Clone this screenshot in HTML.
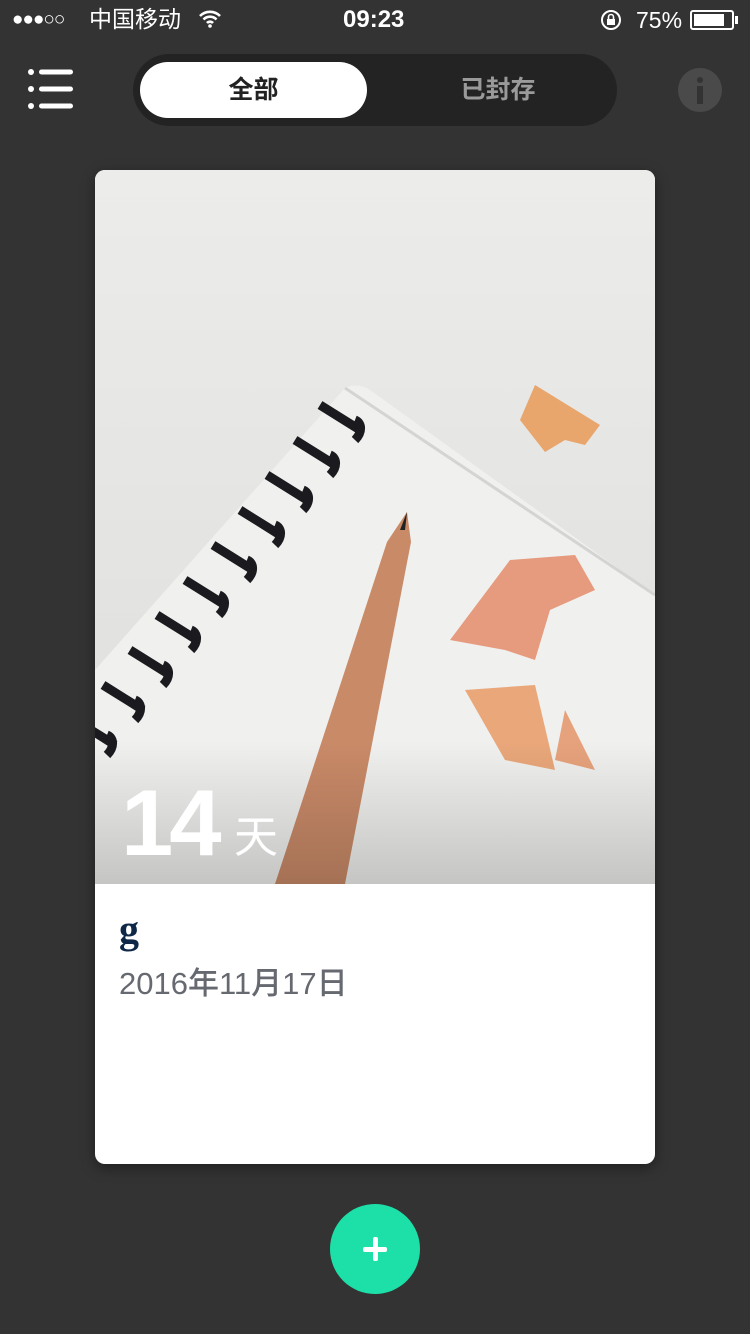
<!DOCTYPE html>
<html><head><meta charset="utf-8">
<style>
*{margin:0;padding:0;box-sizing:border-box}
body{width:750px;height:1334px;background:#333333;position:relative;overflow:hidden;font-family:"Liberation Sans","Noto Sans CJK SC",sans-serif;color:#fff}
.sb{position:absolute;top:0;left:0;width:750px;height:40px;font-size:23px;line-height:40px}
.seg{position:absolute;left:133px;top:54px;width:484px;height:72px;border-radius:36px;background:#232323}
.seg .on{position:absolute;left:7px;top:8px;width:227px;height:56px;border-radius:28px;background:#fff;color:#222;font-size:25px;font-weight:bold;text-align:center;line-height:56px}
.seg .off{position:absolute;left:250px;top:8px;width:230px;height:56px;color:#9a9a9a;font-size:25px;font-weight:bold;text-align:center;line-height:56px}
.card{position:absolute;left:95px;top:170px;width:560px;height:994px;background:#fff;border-radius:10px;overflow:hidden;box-shadow:0 4px 14px rgba(0,0,0,.4)}
.img{position:absolute;left:0;top:0;width:560px;height:714px;background:#e9e9e7}
.fab{position:absolute;left:330px;top:1204px;width:90px;height:90px;border-radius:45px;background:#1de0a8}
</style></head><body>
<div class="sb">
 <div style="position:absolute;left:12px;top:0;font-size:19px;letter-spacing:-1px">●●●○○</div>
 <div style="position:absolute;left:89px;top:-1px">中国移动</div>
 <svg style="position:absolute;left:198px;top:10px" width="24" height="18" viewBox="0 0 24 18"><path d="M2 6a14 14 0 0 1 20 0M5.5 9.5a9 9 0 0 1 13 0M9 13a4 4 0 0 1 6 0" stroke="#fff" stroke-width="2.6" fill="none"/><circle cx="12" cy="16" r="1.8" fill="#fff"/></svg>
 <div style="position:absolute;left:343px;top:0;font-weight:bold;font-size:24px">09:23</div>
 <svg style="position:absolute;left:600px;top:9px" width="24" height="22" viewBox="0 0 24 22"><circle cx="11" cy="11" r="9" stroke="#fff" stroke-width="2" fill="none"/><rect x="7" y="10" width="8" height="6" fill="#fff"/><path d="M8.5 10V8a2.5 2.5 0 0 1 5 0v2" stroke="#fff" stroke-width="1.6" fill="none"/></svg>
 <div style="position:absolute;left:636px;top:0">75%</div>
 <div style="position:absolute;left:690px;top:10px;width:44px;height:20px;border:2px solid #fff;border-radius:3px"><div style="margin:2px;width:30px;height:12px;background:#fff"></div></div>
 <div style="position:absolute;left:735px;top:16px;width:3px;height:8px;background:#fff"></div>
</div>
<svg style="position:absolute;left:26px;top:68px" width="48" height="44" viewBox="0 0 48 44"><g fill="#fff"><circle cx="5" cy="4" r="3"/><circle cx="5" cy="21" r="3"/><circle cx="5" cy="38" r="3"/><rect x="13" y="1.5" width="34" height="5" rx="2.5"/><rect x="13" y="18.5" width="34" height="5" rx="2.5"/><rect x="13" y="35.5" width="34" height="5" rx="2.5"/></g></svg>
<div class="seg"><div class="on">全部</div><div class="off">已封存</div></div>
<div style="position:absolute;left:678px;top:68px;width:44px;height:44px;border-radius:22px;background:#4a4a4a"><div style="position:absolute;left:19px;top:9px;width:6px;height:6px;border-radius:3px;background:#333"></div><div style="position:absolute;left:19px;top:18px;width:6px;height:18px;background:#333"></div></div>
<div class="card">
 <div class="img">
  <svg width="560" height="714" viewBox="0 0 560 714">
   <defs><linearGradient id="bg" x1="0" y1="0" x2="0" y2="1"><stop offset="0" stop-color="#ececea"/><stop offset="1" stop-color="#dddddb"/></linearGradient>
   <linearGradient id="sh" x1="0" y1="0" x2="0" y2="1"><stop offset="0.8" stop-color="#000" stop-opacity="0"/><stop offset="1" stop-color="#000" stop-opacity="0.18"/></linearGradient></defs>
   <rect width="560" height="714" fill="url(#bg)"/>
   <path d="M250 218 Q262 212 275 220 L560 425 L560 714 L0 714 L0 500 Z" fill="#f0f0ee"/>
   <path d="M250 218 L560 425" stroke="#d4d4d2" stroke-width="3"/>
   <g stroke="#1b1b1f" stroke-width="9" fill="none">
    <path d="M265 260 l-40 -25 M240 295 l-40 -25 M212 330 l-40 -25 M185 365 l-40 -25 M158 400 l-40 -25 M130 435 l-40 -25 M102 470 l-40 -25 M75 505 l-40 -25 M48 540 l-40 -25 M20 575 l-40 -25"/>
    <path d="M260 250 a18 12 -35 0 1 0 20 M235 285 a18 12 -35 0 1 0 20 M208 320 a18 12 -35 0 1 0 20 M180 355 a18 12 -35 0 1 0 20 M152 390 a18 12 -35 0 1 0 20 M124 425 a18 12 -35 0 1 0 20 M96 460 a18 12 -35 0 1 0 20 M68 495 a18 12 -35 0 1 0 20 M40 530 a18 12 -35 0 1 0 20 M12 565 a18 12 -35 0 1 0 20"/>
   </g>
   <path d="M312 342 L292 372 L180 714 L250 714 L316 372 Z" fill="#c98a68"/>
   <path d="M312 342 L305 360 L310 360 Z" fill="#222"/>
   <path d="M425 250 L440 215 L505 255 L490 275 L470 270 L450 282 Z" fill="#e8a56c"/>
   <path d="M355 470 L415 390 L480 385 L500 420 L455 440 L440 490 L410 480 Z" fill="#e69a7e"/>
   <path d="M370 520 L440 515 L460 600 L410 590 Z" fill="#e9a77a"/>
   <path d="M460 590 L470 540 L500 600 Z" fill="#e6a27c"/>
   <rect width="560" height="714" fill="url(#sh)"/>
  </svg>
  <div style="position:absolute;left:26px;top:606px;font-size:94px;font-weight:bold;letter-spacing:-4px;line-height:94px">14</div>
  <div style="position:absolute;left:139px;top:645px;font-size:44px;line-height:46px">天</div>
 </div>
 <div style="position:absolute;left:24px;top:736px;font-family:'Liberation Serif',serif;font-weight:bold;font-size:40px;color:#0f2848">g</div>
 <div style="position:absolute;left:24px;top:788px;font-size:31px;color:#666a70;font-weight:500">2016年11月17日</div>
</div>
<div class="fab"><div style="position:absolute;left:33px;top:43px;width:24px;height:5px;border-radius:2px;background:#fff"></div><div style="position:absolute;left:43px;top:33px;width:5px;height:24px;border-radius:2px;background:#fff"></div></div>
</body></html>
